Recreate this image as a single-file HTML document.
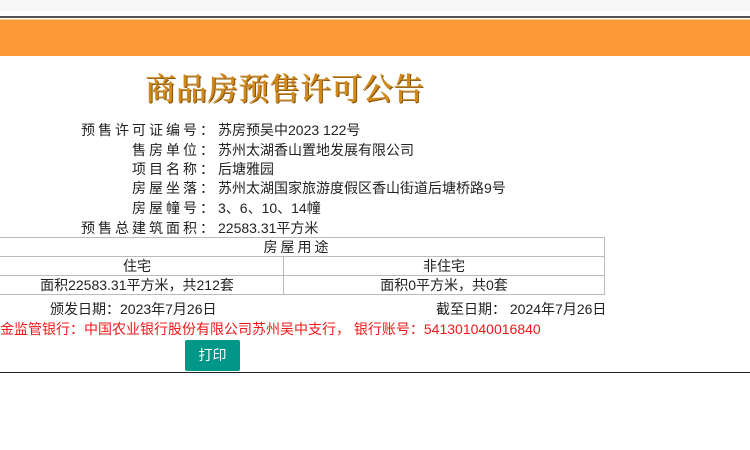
<!DOCTYPE html>
<html><head><meta charset="utf-8"><style>
body{margin:0;width:750px;height:450px;background:#fff;font-family:"Liberation Sans","Noto Sans CJK SC",sans-serif;font-size:14px;color:#222;position:relative;overflow:hidden}
.a{position:absolute}
.lbl{position:absolute;right:533px;text-align:right;white-space:nowrap;letter-spacing:3px}
.val{position:absolute;left:218px;white-space:nowrap}
table{position:absolute;left:-10px;top:237px;width:615px;border-collapse:collapse}
td{border:1px solid #bbb;height:18px;padding:0;text-align:center;font-size:14px;line-height:18px}
</style></head><body>
<div class="a" style="left:0;top:0;width:750px;height:11px;background:#f6f6f6"></div>
<div class="a" style="left:0;top:16px;width:750px;height:2px;background:#555"></div>
<div class="a" style="left:0;top:19px;width:750px;height:36px;background:#fe9a35;border-top:1px solid #ffd090"></div>
<div class="a" style="left:145px;top:66px;font-family:'Noto Serif CJK SC',serif;font-size:31px;color:#d08a1c;line-height:42px;font-weight:600;text-shadow:1px 1px 0 #8a5208">商品房预售许可公告</div>
<div class="lbl" style="top:120px">预售许可证编号：</div><div class="val" style="top:120px">苏房预吴中2023 122号</div>
<div class="lbl" style="top:140px">售房单位：</div><div class="val" style="top:140px">苏州太湖香山置地发展有限公司</div>
<div class="lbl" style="top:159px">项目名称：</div><div class="val" style="top:159px">后塘雅园</div>
<div class="lbl" style="top:178px">房屋坐落：</div><div class="val" style="top:178px">苏州太湖国家旅游度假区香山街道后塘桥路9号</div>
<div class="lbl" style="top:198px">房屋幢号：</div><div class="val" style="top:198px">3、6、10、14幢</div>
<div class="lbl" style="top:218px">预售总建筑面积：</div><div class="val" style="top:218px">22583.31平方米</div>
<table>
<tr><td colspan="2" style="letter-spacing:3px">房屋用途</td></tr>
<tr><td style="width:292px">住宅</td><td>非住宅</td></tr>
<tr><td>面积22583.31平方米，共212套</td><td>面积0平方米，共0套</td></tr>
</table>
<div class="a" style="left:50px;top:299px">颁发日期：2023年7月26日</div>
<div class="a" style="left:436px;top:299px">截至日期： 2024年7月26日</div>
<div class="a" style="left:0;top:319px;color:#f01818">金监管银行：中国农业银行股份有限公司苏州吴中支行， 银行账号：541301040016840</div>
<div class="a" style="left:185px;top:340px;width:55px;height:31px;background:#009688;color:#fff;text-align:center;line-height:31px;border-radius:2px">打印</div>
<div class="a" style="left:0;top:372px;width:750px;height:1px;background:#222"></div>
</body></html>
